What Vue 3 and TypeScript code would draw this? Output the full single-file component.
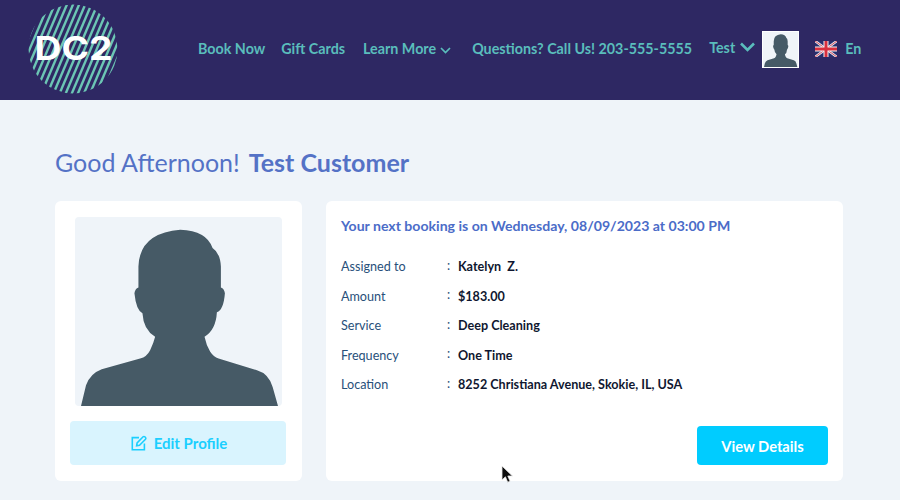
<script setup lang="ts">
const person =
  'M93 632 L108 570 Q120 535 155 522 L270 490 Q290 485 300 465 Q310 445 315 425 Q280 405 277 355 Q258 345 253 295 Q255 282 265 278 L265 215 Q268 115 390 105 Q470 108 487 160 Q510 175 512 215 L512 278 Q522 282 524 295 Q520 345 500 352 Q497 405 463 425 Q468 450 480 470 Q490 485 505 490 L620 525 Q655 535 667 575 L683 632 Z'

const navLinks = ['Book Now', 'Gift Cards']

const details: { label: string; value: string }[] = [
  { label: 'Assigned to', value: 'Katelyn\u00a0\u00a0Z.' },
  { label: 'Amount', value: '$183.00' },
  { label: 'Service', value: 'Deep Cleaning' },
  { label: 'Frequency', value: 'One Time' },
  { label: 'Location', value: '8252 Christiana Avenue, Skokie, IL, USA' },
]

const stripes: number[] = []
for (let i = -12; i <= 24; i++) stripes.push(i * 6.1)
</script>

<template>
  <div class="page">
    <header class="topbar">
      <svg class="logo" viewBox="0 0 90 90" width="90" height="90" aria-label="DC2 logo">
        <defs>
          <clipPath id="logo-circle"><circle cx="45" cy="45" r="44.5" /></clipPath>
        </defs>
        <g clip-path="url(#logo-circle)" stroke="#6cc6b4" stroke-width="2.4">
          <line v-for="s in stripes" :key="s" :x1="s" y1="92" :x2="s + 40" y2="-2" />
        </g>
        <text class="logo-text" x="6.5" y="56" textLength="78" lengthAdjust="spacingAndGlyphs">DC2</text>
      </svg>

      <nav class="nav">
        <a v-for="link in navLinks" :key="link" class="nav-link">{{ link }}</a>
        <a class="nav-link with-caret learn">
          Learn More
          <svg width="11" height="7" viewBox="0 0 11 7" class="caret-small">
            <path d="M1 1l4.5 4.5L10 1" fill="none" stroke="currentColor" stroke-width="1.7" />
          </svg>
        </a>
        <a class="nav-link">Questions? Call Us! 203-555-5555</a>
        <div class="user">
          <a class="nav-link with-caret user-name">
            Test
            <svg width="17" height="10" viewBox="0 0 16 10">
              <path d="M1.5 1.5L8 8l6.5-6.5" fill="none" stroke="currentColor" stroke-width="2.6" />
            </svg>
          </a>
          <div class="avatar-small">
            <svg viewBox="75 67 620 565" preserveAspectRatio="none" width="35" height="35">
              <path :d="person" fill="#465a66" />
            </svg>
          </div>
        </div>
        <div class="lang">
          <svg width="22" height="16" viewBox="0 0 22 16" class="flag">
            <rect width="22" height="16" fill="#27306e" />
            <path d="M0 0L22 16M22 0L0 16" stroke="#e6e8ee" stroke-width="2.6" />
            <path d="M0 0L22 16M22 0L0 16" stroke="#d8404e" stroke-width="0.9" />
            <path d="M11 0V16M0 8H22" stroke="#f4f4f6" stroke-width="5" />
            <path d="M11 0V16M0 8H22" stroke="#d8303e" stroke-width="3" />
          </svg>
          <span class="nav-link">En</span>
        </div>
      </nav>
    </header>

    <main class="content">
      <h1 class="greeting">Good Afternoon!<strong>Test Customer</strong></h1>

      <div class="cards">
        <section class="card profile">
          <div class="photo">
            <svg viewBox="75 67 620 565" width="207" height="189" preserveAspectRatio="none">
              <path :d="person" fill="#465a66" />
            </svg>
          </div>
          <button class="edit-btn" type="button">
            <svg width="16" height="16" viewBox="0 0 16 16" fill="none" stroke="currentColor" stroke-width="1.6">
              <path d="M8 2.6H1.3v12.1h12.1V8.6" />
              <path d="M5.6 10.8l.5-2.9 6-6.1a1.2 1.2 0 0 1 1.7 0l.7.7a1.2 1.2 0 0 1 0 1.7l-6 6z" />
            </svg>
            Edit Profile
          </button>
        </section>

        <section class="card booking">
          <h2 class="booking-title">Your next booking is on Wednesday, 08/09/2023 at&nbsp;03:00 PM</h2>
          <dl class="rows">
            <div v-for="row in details" :key="row.label" class="row">
              <dt>{{ row.label }}</dt>
              <span class="colon">:</span>
              <dd>{{ row.value }}</dd>
            </div>
          </dl>
          <div class="actions">
            <button class="view-btn" type="button">View Details</button>
          </div>
        </section>
      </div>
    </main>

    <svg class="cursor" width="13" height="19" viewBox="0 0 13 19">
      <path d="M1 1v14l3.4-3.2 2.3 5.4 2.4-1-2.3-5.2h4.6z" fill="#0c0c0c" stroke="#e8e8e8" stroke-width="0.8" />
    </svg>
  </div>
</template>

<style>
html,
body {
  margin: 0;
  background: #eff4f9;
}
</style>

<style scoped>
.page {
  position: relative;
  width: 900px;
  height: 500px;
  overflow: hidden;
  background: #eff4f9;
  font-family: Lato, "Liberation Sans", sans-serif;
}
.topbar {
  height: 100px;
  box-sizing: border-box;
  background: #2e2863;
  display: flex;
  align-items: center;
  padding: 0 0 0 28px;
}
.logo {
  flex: none;
  margin-top: -2px;
}
.logo-text {
  font-family: Inter, "DejaVu Sans", sans-serif;
  font-weight: 700;
  font-size: 32px;
  fill: #fff;
}
.nav {
  margin-left: 80px;
  margin-top: -3px;
  display: flex;
  align-items: center;
  font-size: 14.3px;
  font-weight: 700;
  color: #5abdbc;
}
.nav-link {
  color: #5abdbc;
  white-space: nowrap;
  margin-right: 16px;
}
.nav-link:nth-child(2) {
  margin-right: 18px;
}
.learn {
  margin-right: 21px;
}
.with-caret {
  display: flex;
  align-items: center;
  gap: 4px;
}
.caret-small {
  margin-top: 3px;
}
.user {
  display: flex;
  align-items: center;
  margin-left: 1px;
}
.user-name {
  margin-right: 6px;
  margin-top: -3px;
}
.avatar-small {
  width: 35px;
  height: 35px;
  margin-top: 1px;
  border: 1px solid #fff;
  background: #f0f4f8;
  line-height: 0;
}
.lang {
  display: flex;
  align-items: center;
  gap: 8px;
  margin-left: 16px;
}
.nav-link:last-child {
  margin-right: 0;
}
.content {
  padding: 46px 57px 0 55px;
}
.greeting {
  margin: 0 0 23px;
  font-size: 25px;
  line-height: 32px;
  font-weight: 400;
  color: #5472c6;
}
.greeting strong {
  margin-left: 9px;
  font-weight: 700;
}
.cards {
  display: grid;
  grid-template-columns: 247px 517px;
  gap: 24px;
}
.card {
  height: 280px;
  box-sizing: border-box;
  background: #fff;
  border-radius: 6px;
}
.profile {
  padding: 16px 16px 16px 15px;
  display: flex;
  flex-direction: column;
}
.photo {
  width: 207px;
  height: 189px;
  margin-left: 5px;
  background: #eff4f9;
  border-radius: 4px;
  line-height: 0;
  overflow: hidden;
}
.edit-btn {
  margin-top: 15px;
  height: 44px;
  padding: 0 0 0 2px;
  border: 0;
  border-radius: 4px;
  background: #d9f4fe;
  color: #1bcfff;
  font: 700 15px Lato, "Liberation Sans", sans-serif;
  display: flex;
  align-items: center;
  justify-content: center;
  gap: 7px;
}
.booking {
  padding: 15px 15px 16px;
  display: flex;
  flex-direction: column;
}
.booking-title {
  margin: 0;
  font-size: 14.1px;
  line-height: 20px;
  font-weight: 700;
  color: #4b6cc8;
}
.rows {
  margin: 16px 0 0;
}
.row {
  display: grid;
  grid-template-columns: 106px 11px 1fr;
  height: 29.5px;
  align-items: center;
  font-size: 12.6px;
}
.row dt {
  color: #28507a;
}
.colon {
  color: #28507a;
  margin-top: -3px;
}
.row dd {
  margin: 0;
  font-weight: 700;
  color: #0f1730;
}
.actions {
  margin-top: auto;
  display: flex;
  justify-content: flex-end;
}
.view-btn {
  width: 131px;
  height: 39px;
  border: 0;
  border-radius: 4px;
  background: #00ccff;
  color: #fff;
  font: 700 14.7px Lato, "Liberation Sans", sans-serif;
}
.cursor {
  position: absolute;
  left: 501px;
  top: 465px;
}
</style>
